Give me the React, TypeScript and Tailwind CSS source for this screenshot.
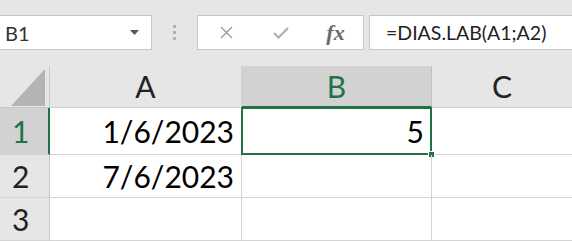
import React from 'react';

const rows = [
  { n: '1', a: '1/6/2023', b: '5', h: 'h-[47px]' },
  { n: '2', a: '7/6/2023', b: '', h: 'h-[43px]' },
  { n: '3', a: '', b: '', h: 'h-[43px]' },
];

const cellFont = { fontFamily: 'Lato, "Open Sans", sans-serif' };

export default function App() {
  return (
    <div className="w-[572px] h-[241px] overflow-hidden bg-white" style={cellFont}>
      {/* Formula bar */}
      <div className="h-[66px] bg-[#e6e6e6] flex items-start pt-[15px]">
        <div className="w-[152px] h-[35px] bg-white border border-[#c6c6c6] border-l-0 flex items-center pl-[5px] pr-[12px]">
          <span className="text-[20px] text-[#333] flex-1">B1</span>
          <svg width="9" height="5" viewBox="0 0 9 5">
            <path d="M0 0 H9 L4.5 5 Z" fill="#555" />
          </svg>
        </div>
        <div className="w-[45px] h-[35px] flex flex-col items-center justify-center gap-[3px]">
          <span className="w-[3px] h-[3px] bg-[#b0b0b0]" />
          <span className="w-[3px] h-[3px] bg-[#b0b0b0]" />
          <span className="w-[3px] h-[3px] bg-[#b0b0b0]" />
        </div>
        <div className="w-[167px] h-[35px] bg-white border border-[#c6c6c6] flex items-center">
          <div className="w-[56px] flex justify-center">
            <svg width="13" height="13" viewBox="0 0 13 13">
              <path d="M1 1 L12 12 M12 1 L1 12" stroke="#9a9a9a" strokeWidth="1.4" fill="none" />
            </svg>
          </div>
          <div className="w-[54px] flex justify-center">
            <svg width="16" height="12" viewBox="0 0 16 12">
              <path d="M1 6 L5.5 10.5 L15 1" stroke="#b0b0b0" strokeWidth="2.2" fill="none" />
            </svg>
          </div>
          <div className="flex-1 flex justify-center">
            <span
              className="italic font-bold text-[22px] text-[#6a6a6a] leading-none"
              style={{ fontFamily: '"Liberation Serif", serif' }}
            >
              fx
            </span>
          </div>
        </div>
        <div className="flex-1 ml-[5px] h-[35px] bg-white border border-[#c6c6c6] border-r-0 flex items-center pl-[16px]">
          <span className="text-[19.5px] text-[#222]">=DIAS.LAB(A1;A2)</span>
        </div>
      </div>

      {/* Sheet */}
      <div className="grid grid-cols-[50px_192px_190px_1fr]">
        {/* header row */}
        <div className="h-[42px] bg-[#e6e6e6] border-r border-b border-[#c8c8c8] flex items-end justify-end pr-[4px] pb-[1px]">
          <svg width="34" height="37" viewBox="0 0 34 37">
            <path d="M34 0 V37 H0 Z" fill="#b4b4b4" />
          </svg>
        </div>
        <div className="h-[42px] bg-[#e6e6e6] border-r border-b border-[#d0d0d0] flex items-center justify-center text-[30px] text-[#222]">
          A
        </div>
        <div className="h-[42px] bg-[#d2d2d2] border-r border-b-2 border-[#c0c0c0] border-b-[#217346] flex items-center justify-center text-[30px] text-[#217346]">
          B
        </div>
        <div className="h-[42px] bg-[#e6e6e6] border-b border-[#d0d0d0] flex items-center justify-center text-[30px] text-[#222]">
          C
        </div>

        {rows.map((r) => (
          <React.Fragment key={r.n}>
            <div
              className={`${r.h} ${
                r.n === '1'
                  ? 'bg-[#d2d2d2] text-[#217346] border-r-2 border-r-[#217346]'
                  : 'bg-[#e6e6e6] text-[#222] border-r border-r-[#c8c8c8]'
              } border-b border-b-[#d4d4d4] flex items-center pl-[12px] text-[30px]`}
            >
              {r.n}
            </div>
            <div className={`${r.h} border-r border-b border-[#d4d4d4] flex items-center justify-end pr-[7px] text-[30px] text-black`}>
              {r.a}
            </div>
            <div className={`${r.h} relative border-r border-b border-[#d4d4d4] flex items-center justify-end pr-[7px] text-[30px] text-black`}>
              {r.b}
              {r.n === '1' && (
                <>
                  <div className="absolute -left-[1px] -top-[1px] -right-[1px] -bottom-[1px] border-2 border-[#217346]" />
                  <div className="absolute -right-[4px] -bottom-[4px] w-[7px] h-[7px] bg-[#217346] border border-white" />
                </>
              )}
            </div>
            <div className={`${r.h} border-b border-[#d4d4d4]`} />
          </React.Fragment>
        ))}
      </div>
    </div>
  );
}
